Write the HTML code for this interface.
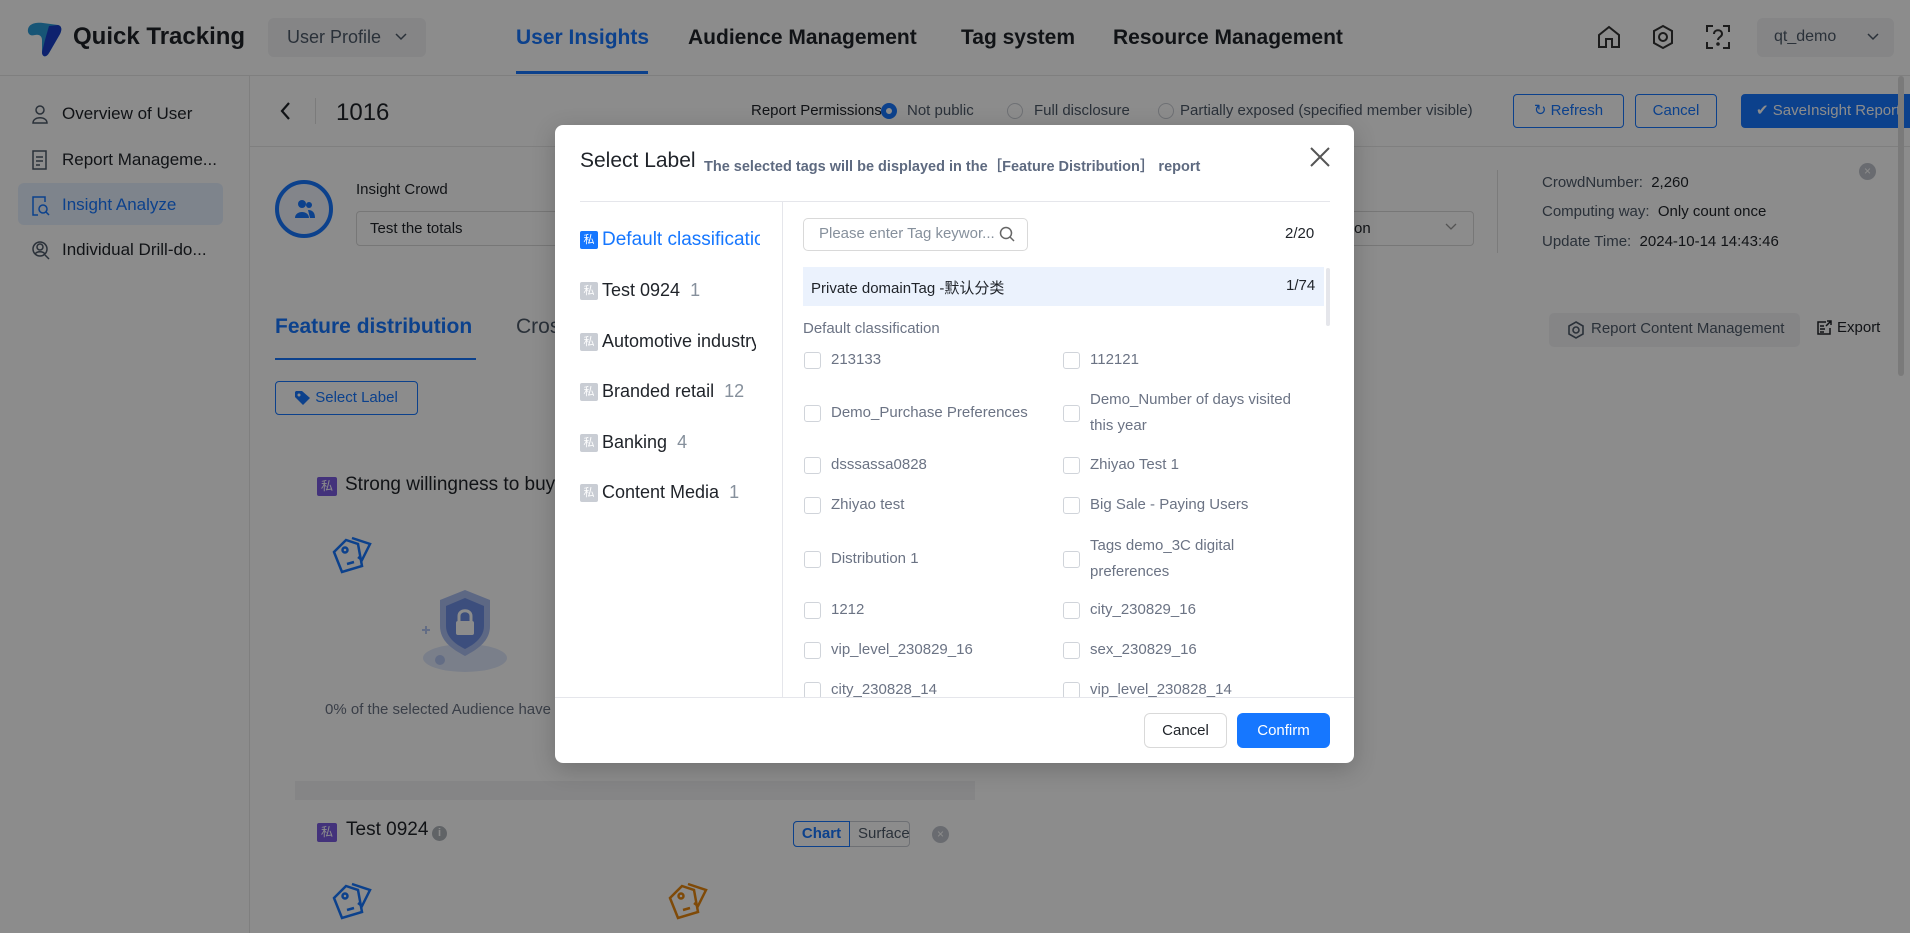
<!DOCTYPE html>
<html><head><meta charset="utf-8">
<style>
*{box-sizing:border-box;margin:0;padding:0}
body{width:1910px;height:933px;overflow:hidden;position:relative;background:#fff;font-family:"Liberation Sans","Noto Sans CJK SC",sans-serif;color:#1f2329}
.a{position:absolute;white-space:nowrap}
.nav{font-size:21px;font-weight:bold;color:#1f2329;top:26px}
.side{left:62px;font-size:17px;color:#1f2329}
.badge{display:inline-block;width:18px;height:18px;background:#c9cdd4;color:#fff;font-size:11px;line-height:18px;text-align:center;border-radius:2px;vertical-align:2px;margin-right:4px}
.cb{position:absolute;width:17px;height:17px;border:1px solid #d0d4da;border-radius:3px;background:#fff}
.lt{position:absolute;font-size:15px;color:#6b7384;line-height:26px;white-space:nowrap}
.radio{position:absolute;width:16px;height:16px;border:1px solid #c9cdd4;border-radius:50%;background:#fff}
.btn{position:absolute;border:1px solid #1677ff;border-radius:4px;color:#1677ff;font-size:15px;text-align:center;background:#fff}
</style></head><body>

<!-- header -->
<div class="a" style="left:0;top:0;width:1910px;height:76px;background:#fff;border-bottom:1px solid #e8e8e8"></div>
<svg class="a" style="left:25px;top:20px" width="38" height="38" viewBox="0 0 38 38"><path d="M3 12 C2 4 10 2 18 3 L33 5 C37 6 37 10 35 14 L24 33 C21 38 17 37 17 32 L17 20 C17 16 14 14 10 15 C6 16 4 15 3 12Z" fill="#2a9bd8"/><path d="M24 6 L33 5 C37 6 37 10 35 14 L24 33 C21 38 17 37 17 32 L20 20Z" fill="#1a3fc9"/></svg>
<div class="a" style="left:73px;top:23px;font-size:24px;font-weight:bold;color:#1f2329">Quick Tracking</div>
<div class="a" style="left:268px;top:18px;width:158px;height:39px;background:#f2f3f5;border-radius:6px"></div>
<div class="a" style="left:287px;top:27px;font-size:18px;color:#4e5969">User Profile</div>
<svg class="a" style="left:395px;top:33px" width="12" height="8"><path d="M1 1 L6 6 L11 1" stroke="#4e5969" stroke-width="1.5" fill="none"/></svg>
<div class="a nav" style="left:516px;color:#1677ff">User Insights</div>
<div class="a" style="left:516px;top:71px;width:132px;height:3px;background:#1677ff"></div>
<div class="a nav" style="left:688px">Audience Management</div>
<div class="a nav" style="left:961px">Tag system</div>
<div class="a nav" style="left:1113px">Resource Management</div>
<svg class="a" style="left:1596px;top:24px" width="26" height="26" viewBox="0 0 26 26" fill="none" stroke="#333" stroke-width="2"><path d="M3 11 L13 3 L23 11 V23 H16 V15 H10 V23 H3Z"/></svg>
<svg class="a" style="left:1650px;top:24px" width="26" height="26" viewBox="0 0 26 26" fill="none" stroke="#333" stroke-width="2"><path d="M13 2 L22 7 V19 L13 24 L4 19 V7Z"/><circle cx="13" cy="13" r="4"/></svg>
<svg class="a" style="left:1705px;top:24px" width="26" height="26" viewBox="0 0 26 26" fill="none" stroke="#333" stroke-width="2"><path d="M2 8 V2 H8 M18 2 H24 V8 M24 18 V24 H18 M8 24 H2 V18"/><path d="M9 10 C9 5 17 5 17 10 C17 13 13 13 13 16"/><circle cx="13" cy="20" r="0.8" fill="#333"/></svg>
<div class="a" style="left:1757px;top:18px;width:137px;height:39px;background:#f2f3f5;border-radius:6px"></div>
<div class="a" style="left:1774px;top:28px;font-size:16px;color:#4e5969">qt_demo</div>
<svg class="a" style="left:1867px;top:33px" width="12" height="8"><path d="M1 1 L6 6 L11 1" stroke="#4e5969" stroke-width="1.5" fill="none"/></svg>

<!-- sidebar -->
<div class="a" style="left:249px;top:76px;width:1px;height:857px;background:#e8e8e8"></div>
<div class="a" style="left:18px;top:183px;width:205px;height:42px;background:#e6f0ff;border-radius:6px"></div>
<svg class="a" style="left:30px;top:104px" width="20" height="20" fill="none" stroke="#4e5969" stroke-width="1.5"><circle cx="10" cy="6" r="4"/><path d="M3 19 C3 12 17 12 17 19Z"/></svg>
<div class="a side" style="top:104px">Overview of User</div>
<svg class="a" style="left:30px;top:150px" width="20" height="20" fill="none" stroke="#4e5969" stroke-width="1.5"><rect x="3" y="1" width="13" height="18"/><path d="M6 7 H13 M6 11 H13 M6 15 H10"/></svg>
<div class="a side" style="top:150px">Report Manageme...</div>
<svg class="a" style="left:30px;top:196px" width="20" height="20" fill="none" stroke="#1677ff" stroke-width="1.5"><path d="M15 6 V1 H3 V19 H8"/><circle cx="13" cy="13" r="4"/><path d="M16 16 L19 19"/></svg>
<div class="a side" style="top:195px;color:#1677ff">Insight Analyze</div>
<svg class="a" style="left:30px;top:240px" width="20" height="20" fill="none" stroke="#4e5969" stroke-width="1.5"><circle cx="10" cy="9" r="7"/><circle cx="10" cy="7" r="3"/><path d="M5 14 C7 11 13 11 15 14 M15 15 L19 19"/></svg>
<div class="a side" style="top:240px">Individual Drill-do...</div>

<!-- top bar -->
<svg class="a" style="left:280px;top:101px" width="12" height="20"><path d="M9 2 L2 10 L9 18" stroke="#1f2329" stroke-width="2.2" fill="none"/></svg>
<div class="a" style="left:315px;top:98px;width:1px;height:26px;background:#e0e0e0"></div>
<div class="a" style="left:336px;top:99px;font-size:24px">1016</div>
<div class="a" style="left:250px;top:146px;width:1660px;height:1px;background:#e8e8e8"></div>
<div class="a" style="left:751px;top:102px;font-size:15px;color:#1f2329">Report Permissions:</div>
<div class="radio" style="left:881px;top:103px;border:5px solid #1677ff"></div>
<div class="a" style="left:907px;top:102px;font-size:15px;color:#4e5969">Not public</div>
<div class="radio" style="left:1007px;top:103px"></div>
<div class="a" style="left:1034px;top:102px;font-size:15px;color:#4e5969">Full disclosure</div>
<div class="radio" style="left:1158px;top:103px"></div>
<div class="a" style="left:1180px;top:102px;font-size:15px;color:#4e5969">Partially exposed (specified member visible)</div>
<div class="btn" style="left:1513px;top:94px;width:111px;height:34px;line-height:32px">&#8635; Refresh</div>
<div class="btn" style="left:1635px;top:94px;width:82px;height:34px;line-height:32px">Cancel</div>
<div class="btn" style="left:1741px;top:94px;width:180px;height:34px;line-height:32px;background:#1677ff;color:#fff;text-align:left;padding-left:14px">&#10004; SaveInsight Report</div>

<!-- crowd -->
<div class="a" style="left:275px;top:180px;width:58px;height:58px;border:4px solid #1677ff;border-radius:50%;background:#eef3fb"></div>
<svg class="a" style="left:294px;top:199px" width="22" height="20" fill="#1677ff"><circle cx="8" cy="5" r="4"/><circle cx="15" cy="6" r="3"/><path d="M1 19 C1 11 15 11 15 19Z M14 11 C19 11 21 14 21 19 H16Z"/></svg>
<div class="a" style="left:356px;top:181px;font-size:15px">Insight Crowd</div>
<div class="a" style="left:356px;top:211px;width:250px;height:35px;border:1px solid #d9d9d9;border-radius:4px"></div>
<div class="a" style="left:370px;top:220px;font-size:15px">Test the totals</div>
<div class="a" style="left:1300px;top:211px;width:174px;height:35px;border:1px solid #d9d9d9;border-radius:4px"></div>
<div class="a" style="left:1354px;top:220px;font-size:15px">on</div>
<svg class="a" style="left:1445px;top:223px" width="12" height="8"><path d="M1 1 L6 6 L11 1" stroke="#999" stroke-width="1.3" fill="none"/></svg>
<div class="a" style="left:1497px;top:170px;width:1px;height:83px;background:#e0e0e0"></div>
<div class="a" style="left:1542px;top:174px;font-size:15px;color:#4e5969">CrowdNumber:&nbsp; <span style="color:#1f2329">2,260</span></div>
<div class="a" style="left:1542px;top:203px;font-size:15px;color:#4e5969">Computing way:&nbsp; <span style="color:#1f2329">Only count once</span></div>
<div class="a" style="left:1542px;top:233px;font-size:15px;color:#4e5969">Update Time:&nbsp; <span style="color:#1f2329">2024-10-14 14:43:46</span></div>
<div class="a" style="left:1859px;top:163px;width:17px;height:17px;border-radius:50%;background:#c0c4cc;color:#fff;font-size:12px;line-height:17px;text-align:center">&#215;</div>

<!-- tabs -->
<div class="a" style="left:275px;top:315px;font-size:21px;font-weight:bold;color:#1677ff">Feature distribution</div>
<div class="a" style="left:275px;top:358px;width:201px;height:2px;background:#1677ff"></div>
<div class="a" style="left:516px;top:315px;font-size:21px;color:#4e5969">Cross</div>
<div class="a" style="left:1549px;top:313px;width:251px;height:34px;background:#f2f3f5;border-radius:5px"></div>
<svg class="a" style="left:1567px;top:321px" width="18" height="18" fill="none" stroke="#4e5969" stroke-width="1.6"><path d="M9 1 L16 5 V13 L9 17 L2 13 V5Z"/><circle cx="9" cy="9" r="3"/></svg>
<div class="a" style="left:1591px;top:320px;font-size:15px;color:#4e5969">Report Content Management</div>
<svg class="a" style="left:1816px;top:320px" width="16" height="16" fill="none" stroke="#1f2329" stroke-width="1.5"><path d="M10 2 H2 V14 H14 V8 M4 6 H8 M4 9 H9 M4 12 H8 M10 6 L15 1 M11 1 H15 V5"/></svg>
<div class="a" style="left:1837px;top:319px;font-size:15px">Export</div>
<div class="btn" style="left:275px;top:381px;width:143px;height:34px;line-height:32px;color:#1677ff;padding-left:20px">Select Label</div>
<svg class="a" style="left:294px;top:390px" width="18" height="16"><path d="M1 2 V7 L9 15 L16 8 L8 1 H2Z" fill="#1677ff"/><circle cx="5" cy="5" r="1.5" fill="#fff"/></svg>

<div class="a" style="left:317px;top:477px;width:20px;height:19px;background:#7b5ce0;color:#fff;font-size:12px;line-height:19px;text-align:center;border-radius:2px">私</div>
<div class="a" style="left:345px;top:474px;font-size:19px">Strong willingness to buy</div>
<svg class="a" style="left:330px;top:532px" width="48" height="50" viewBox="0 0 48 50" fill="none" stroke="#1677ff" stroke-width="2.5"><path d="M4 20 L16 8 L28 12 L32 34 L12 40Z"/><circle cx="15" cy="18" r="2.5"/><path d="M17 32 L24 30"/><path d="M22 6 L40 12 L32 28 L28 25"/></svg>
<svg class="a" style="left:410px;top:578px" width="110" height="100" viewBox="0 0 110 100"><ellipse cx="55" cy="80" rx="42" ry="14" fill="#dfe8fb"/><path d="M55 12 L80 22 V48 C80 64 66 72 55 78 C44 72 30 64 30 48 V22Z" fill="#a9bdf0"/><path d="M55 20 L74 28 V48 C74 60 63 67 55 71 C47 67 36 60 36 48 V28Z" fill="#6d8fe3"/><rect x="46" y="43" width="18" height="14" rx="2" fill="#fff"/><path d="M49 43 V38 C49 31 61 31 61 38 V43" stroke="#fff" stroke-width="3" fill="none"/><circle cx="30" cy="82" r="5" fill="#b5c6f2"/><path d="M12 52 H20 M16 48 V56" stroke="#b5c6f2" stroke-width="2"/></svg>
<div class="a" style="left:325px;top:701px;font-size:15px;color:#6b7384">0% of the selected Audience have the tag</div>
<div class="a" style="left:295px;top:781px;width:680px;height:19px;background:#f2f3f5"></div>
<div class="a" style="left:317px;top:823px;width:20px;height:19px;background:#7b5ce0;color:#fff;font-size:12px;line-height:19px;text-align:center;border-radius:2px">私</div>
<div class="a" style="left:346px;top:819px;font-size:19px">Test 0924</div>
<div class="a" style="left:432px;top:826px;width:15px;height:15px;border-radius:50%;background:#b0b4bb;color:#fff;font-size:11px;line-height:15px;text-align:center;font-weight:bold">i</div>
<div class="a" style="left:793px;top:821px;width:117px;height:26px;border:1px solid #c9cdd4;border-radius:4px"></div>
<div class="a" style="left:793px;top:821px;width:57px;height:26px;border:1px solid #1677ff;border-radius:4px 0 0 4px;color:#1677ff;font-weight:bold;font-size:15px;text-align:center;line-height:24px">Chart</div>
<div class="a" style="left:858px;top:825px;font-size:15px;color:#4e5969">Surface</div>
<div class="a" style="left:932px;top:826px;width:17px;height:17px;border-radius:50%;background:#c0c4cc;color:#fff;font-size:12px;line-height:17px;text-align:center">&#215;</div>
<svg class="a" style="left:330px;top:878px" width="48" height="50" viewBox="0 0 48 50" fill="none" stroke="#1677ff" stroke-width="2.5"><path d="M4 20 L16 8 L28 12 L32 34 L12 40Z"/><circle cx="15" cy="18" r="2.5"/><path d="M17 32 L24 30"/><path d="M22 6 L40 12 L32 28 L28 25"/></svg>
<svg class="a" style="left:666px;top:878px" width="48" height="50" viewBox="0 0 48 50" fill="none" stroke="#e8870f" stroke-width="2.5"><path d="M4 20 L16 8 L28 12 L32 34 L12 40Z"/><circle cx="15" cy="18" r="2.5"/><path d="M17 32 L24 30"/><path d="M22 6 L40 12 L32 28 L28 25"/></svg>

<!-- overlay -->
<div class="a" style="left:0;top:0;width:1910px;height:933px;background:rgba(0,0,0,0.45)"></div>
<div class="a" style="left:1898px;top:76px;width:6px;height:300px;background:#7a7a7a;border-radius:3px"></div>

<!-- modal -->
<div class="a" style="left:555px;top:125px;width:799px;height:638px;background:#fff;border-radius:8px;box-shadow:0 6px 24px rgba(0,0,0,0.2)">
  <div class="a" style="left:25px;top:24px;font-size:21px;color:#1f2329">Select Label</div>
  <div class="a" style="left:149px;top:30px;font-size:14.5px;font-weight:bold;color:#5e6a80">The selected tags will be displayed in the［Feature Distribution］ report</div>
  <svg class="a" style="left:754px;top:21px" width="22" height="22"><path d="M2 2 L20 20 M20 2 L2 20" stroke="#555" stroke-width="2"/></svg>
  <div class="a" style="left:25px;top:76px;width:750px;height:1px;background:#e5e6eb"></div>
  <div class="a" style="left:227px;top:77px;width:1px;height:495px;background:#e5e6eb"></div>

  <div class="a" style="left:25px;top:104px;font-size:19px;color:#1677ff;width:180px;overflow:hidden"><span class="badge" style="background:#1677ff">私</span>Default classification</div>
  <div class="a" style="left:25px;top:155px;font-size:18px"><span class="badge">私</span>Test 0924 <span style="color:#86909c">&nbsp;1</span></div>
  <div class="a" style="left:25px;top:206px;font-size:18px;width:176px;overflow:hidden"><span class="badge">私</span>Automotive industry</div>
  <div class="a" style="left:25px;top:256px;font-size:18px"><span class="badge">私</span>Branded retail <span style="color:#86909c">&nbsp;12</span></div>
  <div class="a" style="left:25px;top:307px;font-size:18px"><span class="badge">私</span>Banking <span style="color:#86909c">&nbsp;4</span></div>
  <div class="a" style="left:25px;top:357px;font-size:18px"><span class="badge">私</span>Content Media <span style="color:#86909c">&nbsp;1</span></div>

  <div class="a" style="left:248px;top:93px;width:225px;height:33px;border:1px solid #d9d9d9;border-radius:5px"></div>
  <div class="a" style="left:264px;top:100px;font-size:15px;color:#86909c">Please enter Tag keywor...</div>
  <svg class="a" style="left:444px;top:101px" width="16" height="16" fill="none" stroke="#666" stroke-width="1.5"><circle cx="7" cy="7" r="5.5"/><path d="M11 11 L15 15"/></svg>
  <div class="a" style="left:730px;top:100px;font-size:15px;color:#1f2329">2/20</div>
  <div class="a" style="left:248px;top:142px;width:521px;height:39px;background:#ebf2fd"></div>
  <div class="a" style="left:256px;top:152px;font-size:15px;color:#1f2329">Private domainTag -默认分类</div>
  <div class="a" style="left:731px;top:152px;font-size:15px;color:#1f2329">1/74</div>
  <div class="a" style="left:771px;top:143px;width:4px;height:58px;background:#e5e6eb;border-radius:2px"></div>
  <div class="a" style="left:248px;top:195px;font-size:15px;color:#6b7384">Default classification</div>

  <div class="a" style="left:0;top:212px;width:799px;height:360px;overflow:hidden">
    <div class="cb" style="left:249px;top:15px"></div><div class="lt" style="left:276px;top:10px">213133</div>
    <div class="cb" style="left:508px;top:15px"></div><div class="lt" style="left:535px;top:10px">112121</div>
    <div class="cb" style="left:249px;top:68px"></div><div class="lt" style="left:276px;top:63px">Demo_Purchase Preferences</div>
    <div class="cb" style="left:508px;top:68px"></div><div class="lt" style="left:535px;top:50px">Demo_Number of days visited<br>this year</div>
    <div class="cb" style="left:249px;top:120px"></div><div class="lt" style="left:276px;top:115px">dsssassa0828</div>
    <div class="cb" style="left:508px;top:120px"></div><div class="lt" style="left:535px;top:115px">Zhiyao Test 1</div>
    <div class="cb" style="left:249px;top:160px"></div><div class="lt" style="left:276px;top:155px">Zhiyao test</div>
    <div class="cb" style="left:508px;top:160px"></div><div class="lt" style="left:535px;top:155px">Big Sale - Paying Users</div>
    <div class="cb" style="left:249px;top:214px"></div><div class="lt" style="left:276px;top:209px">Distribution 1</div>
    <div class="cb" style="left:508px;top:214px"></div><div class="lt" style="left:535px;top:196px">Tags demo_3C digital<br>preferences</div>
    <div class="cb" style="left:249px;top:265px"></div><div class="lt" style="left:276px;top:260px">1212</div>
    <div class="cb" style="left:508px;top:265px"></div><div class="lt" style="left:535px;top:260px">city_230829_16</div>
    <div class="cb" style="left:249px;top:305px"></div><div class="lt" style="left:276px;top:300px">vip_level_230829_16</div>
    <div class="cb" style="left:508px;top:305px"></div><div class="lt" style="left:535px;top:300px">sex_230829_16</div>
    <div class="cb" style="left:249px;top:345px"></div><div class="lt" style="left:276px;top:340px">city_230828_14</div>
    <div class="cb" style="left:508px;top:345px"></div><div class="lt" style="left:535px;top:340px">vip_level_230828_14</div>
  </div>
  <div class="a" style="left:0;top:572px;width:799px;height:1px;background:#e5e6eb"></div>
  <div class="a" style="left:589px;top:588px;width:83px;height:35px;border:1px solid #d9d9d9;border-radius:6px;font-size:15px;text-align:center;line-height:33px">Cancel</div>
  <div class="a" style="left:682px;top:588px;width:93px;height:35px;background:#1677ff;border-radius:6px;font-size:15px;color:#fff;text-align:center;line-height:35px">Confirm</div>
</div>
</body></html>
